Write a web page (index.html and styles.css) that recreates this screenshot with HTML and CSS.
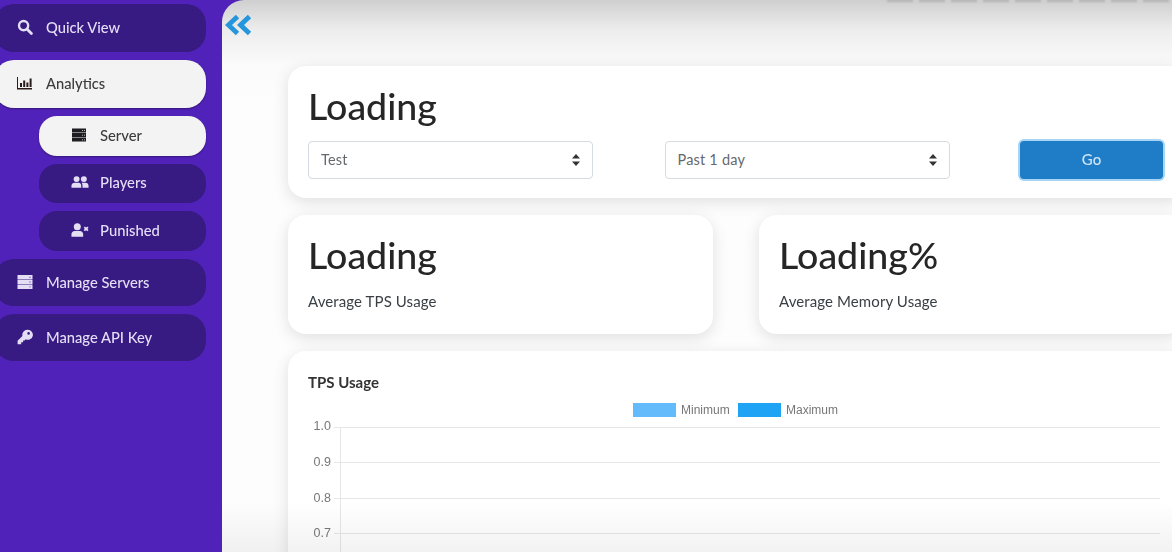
FILE: index.html
```html
<!DOCTYPE html>
<html lang="en">
<head>
  <meta charset="UTF-8" />
  <meta name="viewport" content="width=device-width, initial-scale=1.0"/>
  <title>Analytics</title>
  <link rel="stylesheet" href="styles.css">
</head>
<body>
  <div class="app">
    <nav class="sidebar">
      <a class="nav-item">
        <svg class="nav-icon" viewBox="0 0 16 16"><circle cx="6.6" cy="6.6" r="4.6" fill="none" stroke="currentColor" stroke-width="2.4"/><path d="M10 10l4.4 4.4" stroke="currentColor" stroke-width="2.8" stroke-linecap="round"/></svg>
        Quick View
      </a>
      <a class="nav-item active">
        <svg class="nav-icon" viewBox="0 0 16 16"><path d="M1 2v11h14v1.6H0V2z" fill="#2a1a1a"/><path d="M3 8h2v4H3zM6.2 5.5h2V12h-2zM9.4 7.500h2V12h-2zM12.600 3.500h2V12h-2z" fill="#2a1a1a"/></svg>
        Analytics
      </a>
      <div class="sub-nav">
        <a class="nav-item sub active">
          <svg class="nav-icon" viewBox="0 0 16 16"><path d="M1 1.500h14v4H1zM1 6h14v4H1zM1 10.500h14v4H1z" fill="#1c1c22"/><path d="M11 3h1v.8h-1zM13 3h1v.8h-1zM11 7.700h1v.8h-1zM13 7.700h1v.8h-1zM11 12.400h1v.8h-1zM13 12.400h1v.8h-1z" fill="#eee"/></svg>
          Server
        </a>
        <a class="nav-item sub">
          <svg class="nav-icon wide" viewBox="0 0 20 16"><circle cx="6.200" cy="4.800" r="3.300" fill="currentColor"/><circle cx="14.300" cy="4.800" r="3.300" fill="currentColor"/><path d="M.5 14.500v-2.300C.5 10 2.300 8.800 4 8.800h4.400c1.700 0 3 1.300 3 3.400v2.300zM12.800 14.500v-2.500c0-1.300-.4-2.300-1-3.200h4.400c1.800 0 3.300 1.300 3.300 3.400v2.300z" fill="currentColor"/></svg>
          Players
        </a>
        <a class="nav-item sub">
          <svg class="nav-icon wide" viewBox="0 0 20 16"><circle cx="7" cy="4.300" r="3.900" fill="currentColor"/><path d="M.5 15.500v-3c0-2 1.700-3.500 3.500-3.500h6c1.800 0 3.500 1.500 3.500 3.500v3z" fill="currentColor"/><path d="M14.800 4.800l4 4M18.800 4.800l-4 4" stroke="currentColor" stroke-width="2"/></svg>
          Punished
        </a>
      </div>
      <a class="nav-item short">
        <svg class="nav-icon" viewBox="0 0 16 16"><path d="M.5 1h15v4.300H.5zM.5 5.800h15v4.300H.5zM.5 10.600h15v4.300H.5z" fill="currentColor"/><path d="M12 2.800h2v.9h-2zM12 7.600h2v.9h-2zM12 12.400h2v.9h-2z" fill="#8a78c8"/></svg>
        Manage Servers
      </a>
      <a class="nav-item short">
        <svg class="nav-icon" viewBox="0 0 16 16"><path d="M10.300.8a5 5 0 0 0-4.900 6.100L.6 11.700v3.500h3.600v-1.900h1.900v-1.900h1.500l1.100-1.100a5 5 0 1 0 2.100-9.500zm1.300 2.300a1.300 1.300 0 1 1 0 2.600 1.300 1.300 0 0 1 0-2.600z" fill="currentColor"/></svg>
        Manage API Key
      </a>
    </nav>

    <main class="content">
      <div class="top-smear"></div>
      <svg class="toggle" viewBox="0 0 28 22"><path d="M12.500 2.500L3.500 11l9 8.500M24.500 2.500l-9 8.500 9 8.500" fill="none" stroke="#2596dc" stroke-width="4.800"/></svg>

      <section class="card head-card">
        <h1>Loading</h1>
        <div class="filters">
          <div class="select"><span>Test</span><svg class="caret" viewBox="0 0 8 12"><path d="M4 0l4 4.600H0zM4 12L0 7.400h8z" fill="#333"/></svg></div>
          <div class="select"><span>Past 1 day</span><svg class="caret" viewBox="0 0 8 12"><path d="M4 0l4 4.600H0zM4 12L0 7.400h8z" fill="#333"/></svg></div>
          <button class="go">Go</button>
        </div>
      </section>

      <div class="stats">
        <section class="card stat">
          <h1>Loading</h1>
          <p>Average TPS Usage</p>
        </section>
        <section class="card stat">
          <h1>Loading%</h1>
          <p>Average Memory Usage</p>
        </section>
      </div>

      <section class="card chart-card">
        <h2>TPS Usage</h2>
        <svg class="chart" width="864" height="170" viewBox="0 0 864 170">
          <rect x="325" y="12" width="43" height="14" fill="#63bbfb"/>
          <text x="373" y="23">Minimum</text>
          <rect x="430" y="12" width="43" height="14" fill="#1ea3f5"/>
          <text x="478" y="23">Maximum</text>
          <g stroke="#e6e6e6" stroke-width="1">
            <path d="M26 36.500H852M26 71.500H852M26 107.500H852M26 142.500H852M32.500 36V170"/>
          </g>
          <g class="ticks" text-anchor="end">
            <text x="23" y="39">1.0</text>
            <text x="23" y="75">0.9</text>
            <text x="23" y="111">0.8</text>
            <text x="23" y="146">0.7</text>
          </g>
        </svg>
      </section>
      <div class="bottom-fade"></div>
    </main>
  </div>
</body>
</html>
```

FILE: styles.css
```css
html, body {
  margin: 0;
  padding: 0;
  height: 552px;
  overflow: hidden;
}
body {
  font-family: "Lato", "Noto Sans", sans-serif;
  color: #2b2b2b;
}
.app {
  display: flex;
  width: 1172px;
  height: 552px;
  background: #5122b9;
  filter: blur(0.35px);
}

/* sidebar */
.sidebar {
  width: 222px;
  flex: none;
  padding: 4px 16px 0 0;
  box-sizing: border-box;
  display: flex;
  flex-direction: column;
  gap: 8px;
}
.nav-item {
  display: flex;
  align-items: center;
  height: 48px;
  margin-left: -6px;
  padding: 0 0 2px 23px;
  box-sizing: border-box;
  gap: 13px;
  border-radius: 20px;
  background: #371a82;
  color: #e4def5;
  font-size: 14.700px;
  font-weight: 500;
}
.nav-item.active {
  background: #f3f3f3;
  color: #3c3c3c;
  box-shadow: 0 1px 2px rgba(0,0,0,0.35);
}
.nav-item.short {
  height: 47px;
  flex: none;
}
.nav-icon {
  width: 16px;
  height: 16px;
  flex: none;
}
.sub-nav {
  display: flex;
  flex-direction: column;
  gap: 8px;
  padding-left: 39px;
  margin-bottom: 0.500px;
}
.nav-item.sub {
  height: 39.500px;
  margin-left: 0;
  padding-left: 32px;
  gap: 13px;
  font-size: 14.800px;
  border-radius: 18px;
}
.nav-icon.wide {
  width: 18px;
  margin-right: -2px;
}

/* main area */
.content {
  position: relative;
  flex: 1;
  min-width: 0;
  background: linear-gradient(#cfcfcf 0, #ededed 30px, #fafafa 64px, #fdfdfd 100px);
  border-top-left-radius: 22px;
  padding: 66px 0 0 66px;
  box-sizing: border-box;
  overflow: hidden;
}
.top-smear {
  position: absolute;
  top: -1px;
  right: 0;
  width: 285px;
  height: 3px;
  background: repeating-linear-gradient(90deg, #b4b4b4 0 26px, #d0d0d0 26px 32px);
  filter: blur(1px);
}
.toggle {
  position: absolute;
  left: 3px;
  top: 14px;
  width: 28px;
  height: 22px;
}
.card {
  background: #fff;
  border-radius: 18px;
  box-shadow: 0 4px 16px rgba(0,0,0,0.12);
  box-sizing: border-box;
}
h1 {
  margin: 0;
  font-size: 37.500px;
  font-weight: 500;
  line-height: 44px;
  color: #262626;
}
.head-card {
  width: 900px;
  height: 132px;
  padding: 18px 20px 0;
}
.filters {
  display: flex;
  align-items: center;
  margin-top: 13px;
}
.select {
  width: 285px;
  height: 38px;
  margin-right: 71.500px;
  padding: 0 12px 2px 12px;
  box-sizing: border-box;
  display: flex;
  justify-content: space-between;
  align-items: center;
  border: 1px solid #d5dbe2;
  border-radius: 4px;
  background: #fff;
  color: #66696c;
  font-size: 14.500px;
  letter-spacing: 0.200px;
}
.caret {
  width: 8px;
  height: 12px;
  margin-top: 2px;
}
.go {
  width: 143px;
  height: 38px;
  margin-left: -1px;
  padding: 0 0 2px;
  border: none;
  border-radius: 4px;
  background: #1f7cc6;
  box-shadow: 0 0 0 2px #a9d5f5;
  color: #cfe6f8;
  font-family: inherit;
  font-size: 15px;
  font-weight: 500;
}
.stats {
  display: flex;
  gap: 46px;
  margin-top: 17px;
}
.stat {
  width: 425px;
  height: 119px;
  padding: 18px 20px 0;
  flex: none;
}
.stat p {
  margin: 15px 0 0;
  font-size: 15px;
  letter-spacing: 0.100px;
  color: #3a4045;
}
.chart-card {
  width: 900px;
  height: 240px;
  margin-top: 17px;
  padding: 21px 20px 0;
}
h2 {
  margin: 0;
  font-size: 15px;
  font-weight: 700;
  line-height: 20px;
  color: #333;
}
.chart {
  display: block;
  margin-top: -1px;
  font-family: "Liberation Sans", Arial, sans-serif;
  font-size: 12px;
  fill: #777;
}
.ticks {
  font-size: 12.500px;
}
.bottom-fade {
  position: absolute;
  left: 0;
  right: 0;
  bottom: 0;
  height: 50px;
  background: linear-gradient(rgba(0,0,0,0), rgba(0,0,0,0.05));
  pointer-events: none;
}
```
